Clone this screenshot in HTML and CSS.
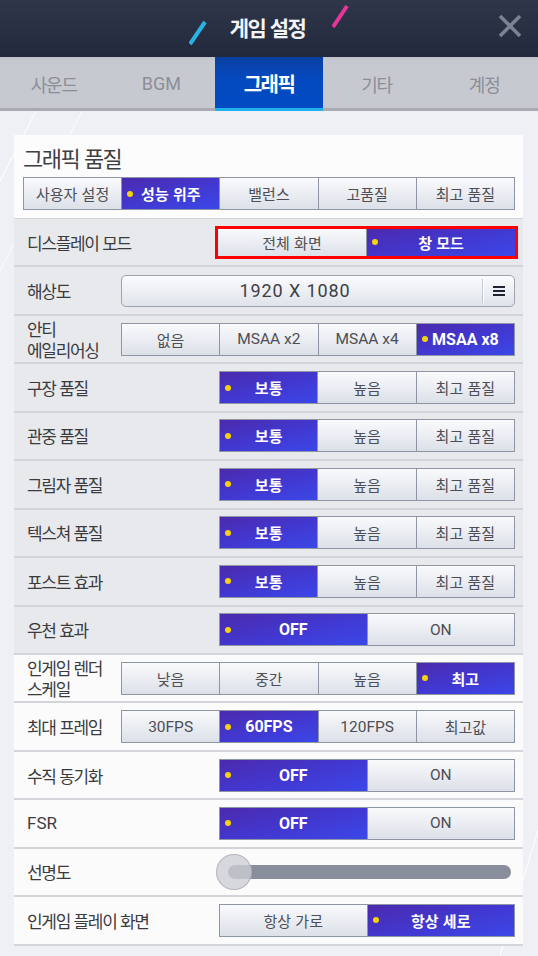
FILE: index.html
```html
<!DOCTYPE html>
<html lang="ko">
<head>
<meta charset="utf-8">
<title>게임 설정</title>
<link rel="stylesheet" href="styles.css">
</head>
<body>
<div class="app">
  <header class="topbar">
    <div class="title-wrap">
      <svg class="slash slash-cyan" width="18" height="57" viewBox="0 0 18 57"><line x1="1" y1="44" x2="16" y2="22" stroke="#27b3e6" stroke-width="4"/></svg>
      <h1 class="title">게임 설정</h1>
      <svg class="slash slash-pink" width="18" height="57" viewBox="0 0 18 57"><line x1="1" y1="27" x2="15" y2="6" stroke="#e8359b" stroke-width="4"/></svg>
    </div>
    <svg class="close" width="24" height="24" viewBox="0 0 24 24"><path d="M2 2 L22 22 M22 2 L2 22" stroke="#7d8192" stroke-width="3.6" fill="none"/></svg>
  </header>

  <nav class="tabs">
    <div class="tab">사운드</div>
    <div class="tab latin">BGM</div>
    <div class="tab active">그래픽</div>
    <div class="tab">기타</div>
    <div class="tab">계정</div>
  </nav>

  <main class="content">
    <section class="card">
      <div class="card-head">
        <h2 class="sec-title">그래픽 품질</h2>
        <div class="seg">
          <div class="opt">사용자 설정</div>
          <div class="opt on">성능 위주</div>
          <div class="opt">밸런스</div>
          <div class="opt">고품질</div>
          <div class="opt">최고 품질</div>
        </div>
      </div>

      <div class="row gray">
        <span class="label">디스플레이 모드</span>
        <div class="ctrl outlined">
          <div class="seg slim">
            <div class="opt">전체 화면</div>
            <div class="opt on">창 모드</div>
          </div>
        </div>
      </div>

      <div class="row gray">
        <span class="label">해상도</span>
        <div class="ctrl wide dropdown">
          <span class="dd-text">1920 X 1080</span>
          <span class="dd-sep"></span>
          <span class="dd-icon"><svg width="12" height="10" viewBox="0 0 12 10"><path d="M0 1h12M0 5h12M0 9h12" stroke="#1f2230" stroke-width="2"/></svg></span>
        </div>
      </div>

      <div class="row gray">
        <span class="label two">안티<br>에일리어싱</span>
        <div class="ctrl wide seg">
          <div class="opt">없음</div>
          <div class="opt latin">MSAA x2</div>
          <div class="opt latin">MSAA x4</div>
          <div class="opt latin on">MSAA x8</div>
        </div>
      </div>

      <div class="row gray">
        <span class="label">구장 품질</span>
        <div class="ctrl narrow seg">
          <div class="opt on">보통</div>
          <div class="opt">높음</div>
          <div class="opt">최고 품질</div>
        </div>
      </div>

      <div class="row gray">
        <span class="label">관중 품질</span>
        <div class="ctrl narrow seg">
          <div class="opt on">보통</div>
          <div class="opt">높음</div>
          <div class="opt">최고 품질</div>
        </div>
      </div>

      <div class="row gray">
        <span class="label">그림자 품질</span>
        <div class="ctrl narrow seg">
          <div class="opt on">보통</div>
          <div class="opt">높음</div>
          <div class="opt">최고 품질</div>
        </div>
      </div>

      <div class="row gray">
        <span class="label">텍스쳐 품질</span>
        <div class="ctrl narrow seg">
          <div class="opt on">보통</div>
          <div class="opt">높음</div>
          <div class="opt">최고 품질</div>
        </div>
      </div>

      <div class="row gray">
        <span class="label">포스트 효과</span>
        <div class="ctrl narrow seg">
          <div class="opt on">보통</div>
          <div class="opt">높음</div>
          <div class="opt">최고 품질</div>
        </div>
      </div>

      <div class="row gray">
        <span class="label">우천 효과</span>
        <div class="ctrl narrow seg">
          <div class="opt latin on">OFF</div>
          <div class="opt latin">ON</div>
        </div>
      </div>

      <div class="row">
        <span class="label two">인게임 렌더<br>스케일</span>
        <div class="ctrl wide seg">
          <div class="opt">낮음</div>
          <div class="opt">중간</div>
          <div class="opt">높음</div>
          <div class="opt on">최고</div>
        </div>
      </div>

      <div class="row">
        <span class="label">최대 프레임</span>
        <div class="ctrl wide seg">
          <div class="opt latin">30FPS</div>
          <div class="opt latin on">60FPS</div>
          <div class="opt latin">120FPS</div>
          <div class="opt">최고값</div>
        </div>
      </div>

      <div class="row">
        <span class="label">수직 동기화</span>
        <div class="ctrl narrow seg">
          <div class="opt latin on">OFF</div>
          <div class="opt latin">ON</div>
        </div>
      </div>

      <div class="row">
        <span class="label latin-label">FSR</span>
        <div class="ctrl narrow seg">
          <div class="opt latin on">OFF</div>
          <div class="opt latin">ON</div>
        </div>
      </div>

      <div class="row">
        <span class="label">선명도</span>
        <div class="ctrl narrow slider">
          <div class="track"><span class="knob"></span></div>
        </div>
      </div>

      <div class="row">
        <span class="label">인게임 플레이 화면</span>
        <div class="ctrl narrow seg">
          <div class="opt">항상 가로</div>
          <div class="opt on">항상 세로</div>
        </div>
      </div>
    </section>
  </main>
</div>
</body>
</html>
```

FILE: styles.css
```css
* { box-sizing: border-box; }

html, body {
  margin: 0;
  padding: 0;
}

body {
  width: 538px;
  height: 956px;
  overflow: hidden;
  font-family: Roboto, "Noto Sans CJK KR", sans-serif;
  background: #eff0f5;
}

.app {
  width: 538px;
  height: 956px;
  display: flex;
  flex-direction: column;
}

/* ---------- top bar ---------- */
.topbar {
  position: relative;
  height: 57px;
  flex: 0 0 57px;
  background: linear-gradient(#30364a, #22293c);
  display: flex;
  justify-content: center;
}

.title-wrap {
  display: flex;
  align-items: center;
  margin-left: 1px;
}

.slash { display: block; flex: 0 0 auto; }
.slash-cyan { margin-right: 23px; }
.slash-pink { margin-left: 27px; }

.title {
  margin: 0 0 3px 0;
  font-family: "Noto Sans CJK KR", sans-serif;
  font-size: 21px;
  font-weight: 700;
  letter-spacing: -1.5px;
  color: #f3f4f8;
  line-height: 1;
}

.close {
  position: absolute;
  right: 16px;
  top: 14px;
}

/* ---------- tabs ---------- */
.tabs {
  flex: 0 0 54px;
  height: 54px;
  display: flex;
  background: linear-gradient(#bfc1ca 0, #c7c9d1 4px, #c7c9d1 100%);
  border-bottom: 3px solid #aaabb1;
}

.tab {
  flex: 1 1 0;
  display: flex;
  align-items: center;
  justify-content: center;
  font-family: "Noto Sans CJK KR", sans-serif;
  font-size: 18px;
  letter-spacing: -1.2px;
  color: #8c8e97;
  padding-top: 2px;
}

.tab.latin {
  font-family: Roboto, sans-serif;
  letter-spacing: 0;
}

.tab.active {
  background: linear-gradient(#0a3f9f, #0549bf 40%, #004bc3);
  color: #fff;
  font-weight: 700;
  font-size: 20px;
  letter-spacing: -1.5px;
  box-shadow: 0 3px 0 #1fb2ee;
}

/* ---------- content ---------- */
.content {
  flex: 1 1 auto;
  padding: 24px 15px 0 14px;
  background:
    linear-gradient(to top left, transparent calc(50% - 1px), rgba(255,255,255,0.95) 50%, transparent calc(50% + 1px)) 0 0 / 36px 70px no-repeat,
    linear-gradient(to top left, transparent calc(50% - 1px), rgba(255,255,255,0.7) 50%, transparent calc(50% + 1px)) 0 0 / 82px 160px no-repeat,
    linear-gradient(to top left, transparent calc(50% - 1px), rgba(255,255,255,0.95) 50%, transparent calc(50% + 1px)) 500px 719px / 38px 126px no-repeat,
    #eff0f5;
}

.card {
  width: 509px;
}

.card-head {
  height: 84px;
  background: #fcfcfd;
  padding: 8px 8px 0 9px;
  border-bottom: 1px solid #d4d5da;
}

.sec-title {
  margin: 0 0 5px 0;
  height: 29px;
  line-height: 29px;
  font-family: "Noto Sans CJK KR", sans-serif;
  font-weight: 400;
  font-size: 22px;
  letter-spacing: -1.5px;
  color: #3f3f42;
}

/* ---------- rows ---------- */
.row {
  height: 48.45px;
  display: flex;
  align-items: center;
  padding: 0 8px 0 13px;
  background: #fbfbfc;
  border-bottom: 2px solid #d3d4d9;
}

.row.gray { background: #e8e9ed; }

.label {
  flex: 1 1 auto;
  font-family: "Noto Sans CJK KR", sans-serif;
  font-size: 17px;
  letter-spacing: -1.3px;
  color: #3b3b3e;
  line-height: 21px;
}

.label.two {
  line-height: 21px;
}

.label.latin-label {
  font-family: Roboto, sans-serif;
  letter-spacing: 0;
}

.ctrl { flex: 0 0 auto; }
.ctrl.narrow { width: 296px; }
.ctrl.wide { width: 394px; }

/* ---------- segmented buttons ---------- */
.seg {
  display: flex;
  height: 33px;
  border: 1px solid #8e95a4;
}

.seg.slim { height: 27px; border: none; }

.opt {
  flex: 1 1 0;
  position: relative;
  display: flex;
  align-items: center;
  justify-content: center;
  background: linear-gradient(#f9fafc, #dce0e8);
  color: #4e4f54;
  font-family: "Noto Sans CJK KR", sans-serif;
  font-size: 15px;
  white-space: nowrap;
}

.opt + .opt { border-left: 1px solid #8e95a4; }

.opt.latin {
  font-family: Roboto, sans-serif;
  font-size: 15.5px;
}

.opt.on {
  background: linear-gradient(165deg, #4c2aad 0%, #4237cf 50%, #3b47e8 100%);
  color: #fff;
  font-weight: 700;
}

.opt.on::before {
  content: "";
  position: absolute;
  left: 5px;
  top: 50%;
  width: 6px;
  height: 6px;
  margin-top: -3px;
  border-radius: 50%;
  background: #f4d30b;
}

.opt.latin.on { font-size: 16px; }

/* outlined (red highlight) */
.ctrl.outlined {
  width: 303px;
  margin-right: -3px;
  border: 3px solid #f00;
}

/* ---------- dropdown ---------- */
.dropdown {
  height: 32px;
  display: flex;
  align-items: center;
  border: 1px solid #9ca2ae;
  border-radius: 5px;
  background: linear-gradient(#fafbfd, #dfe3ea);
}

.dd-text {
  flex: 1 1 auto;
  text-align: center;
  padding-right: 14px;
  font-family: Roboto, sans-serif;
  font-size: 18px;
  letter-spacing: 0.9px;
  color: #3e3f44;
}

.dd-sep {
  width: 2px;
  height: 24px;
  background: linear-gradient(90deg, #c3c8d1 50%, #ffffff 50%);
}

.dd-icon {
  width: 30px;
  display: flex;
  justify-content: center;
  align-items: center;
}

.dd-icon svg { display: block; }

/* ---------- slider ---------- */
.slider {
  height: 36px;
  display: flex;
  align-items: center;
  padding: 0 4px 0 9px;
}

.track {
  position: relative;
  flex: 1 1 auto;
  height: 14px;
  border-radius: 7px;
  background: #898e9c;
}

.knob {
  position: absolute;
  left: -12px;
  top: -11px;
  width: 36px;
  height: 36px;
  border-radius: 50%;
  background: rgba(205, 206, 211, 0.78);
  border: 1px solid rgba(175, 177, 185, 0.9);
}
```
